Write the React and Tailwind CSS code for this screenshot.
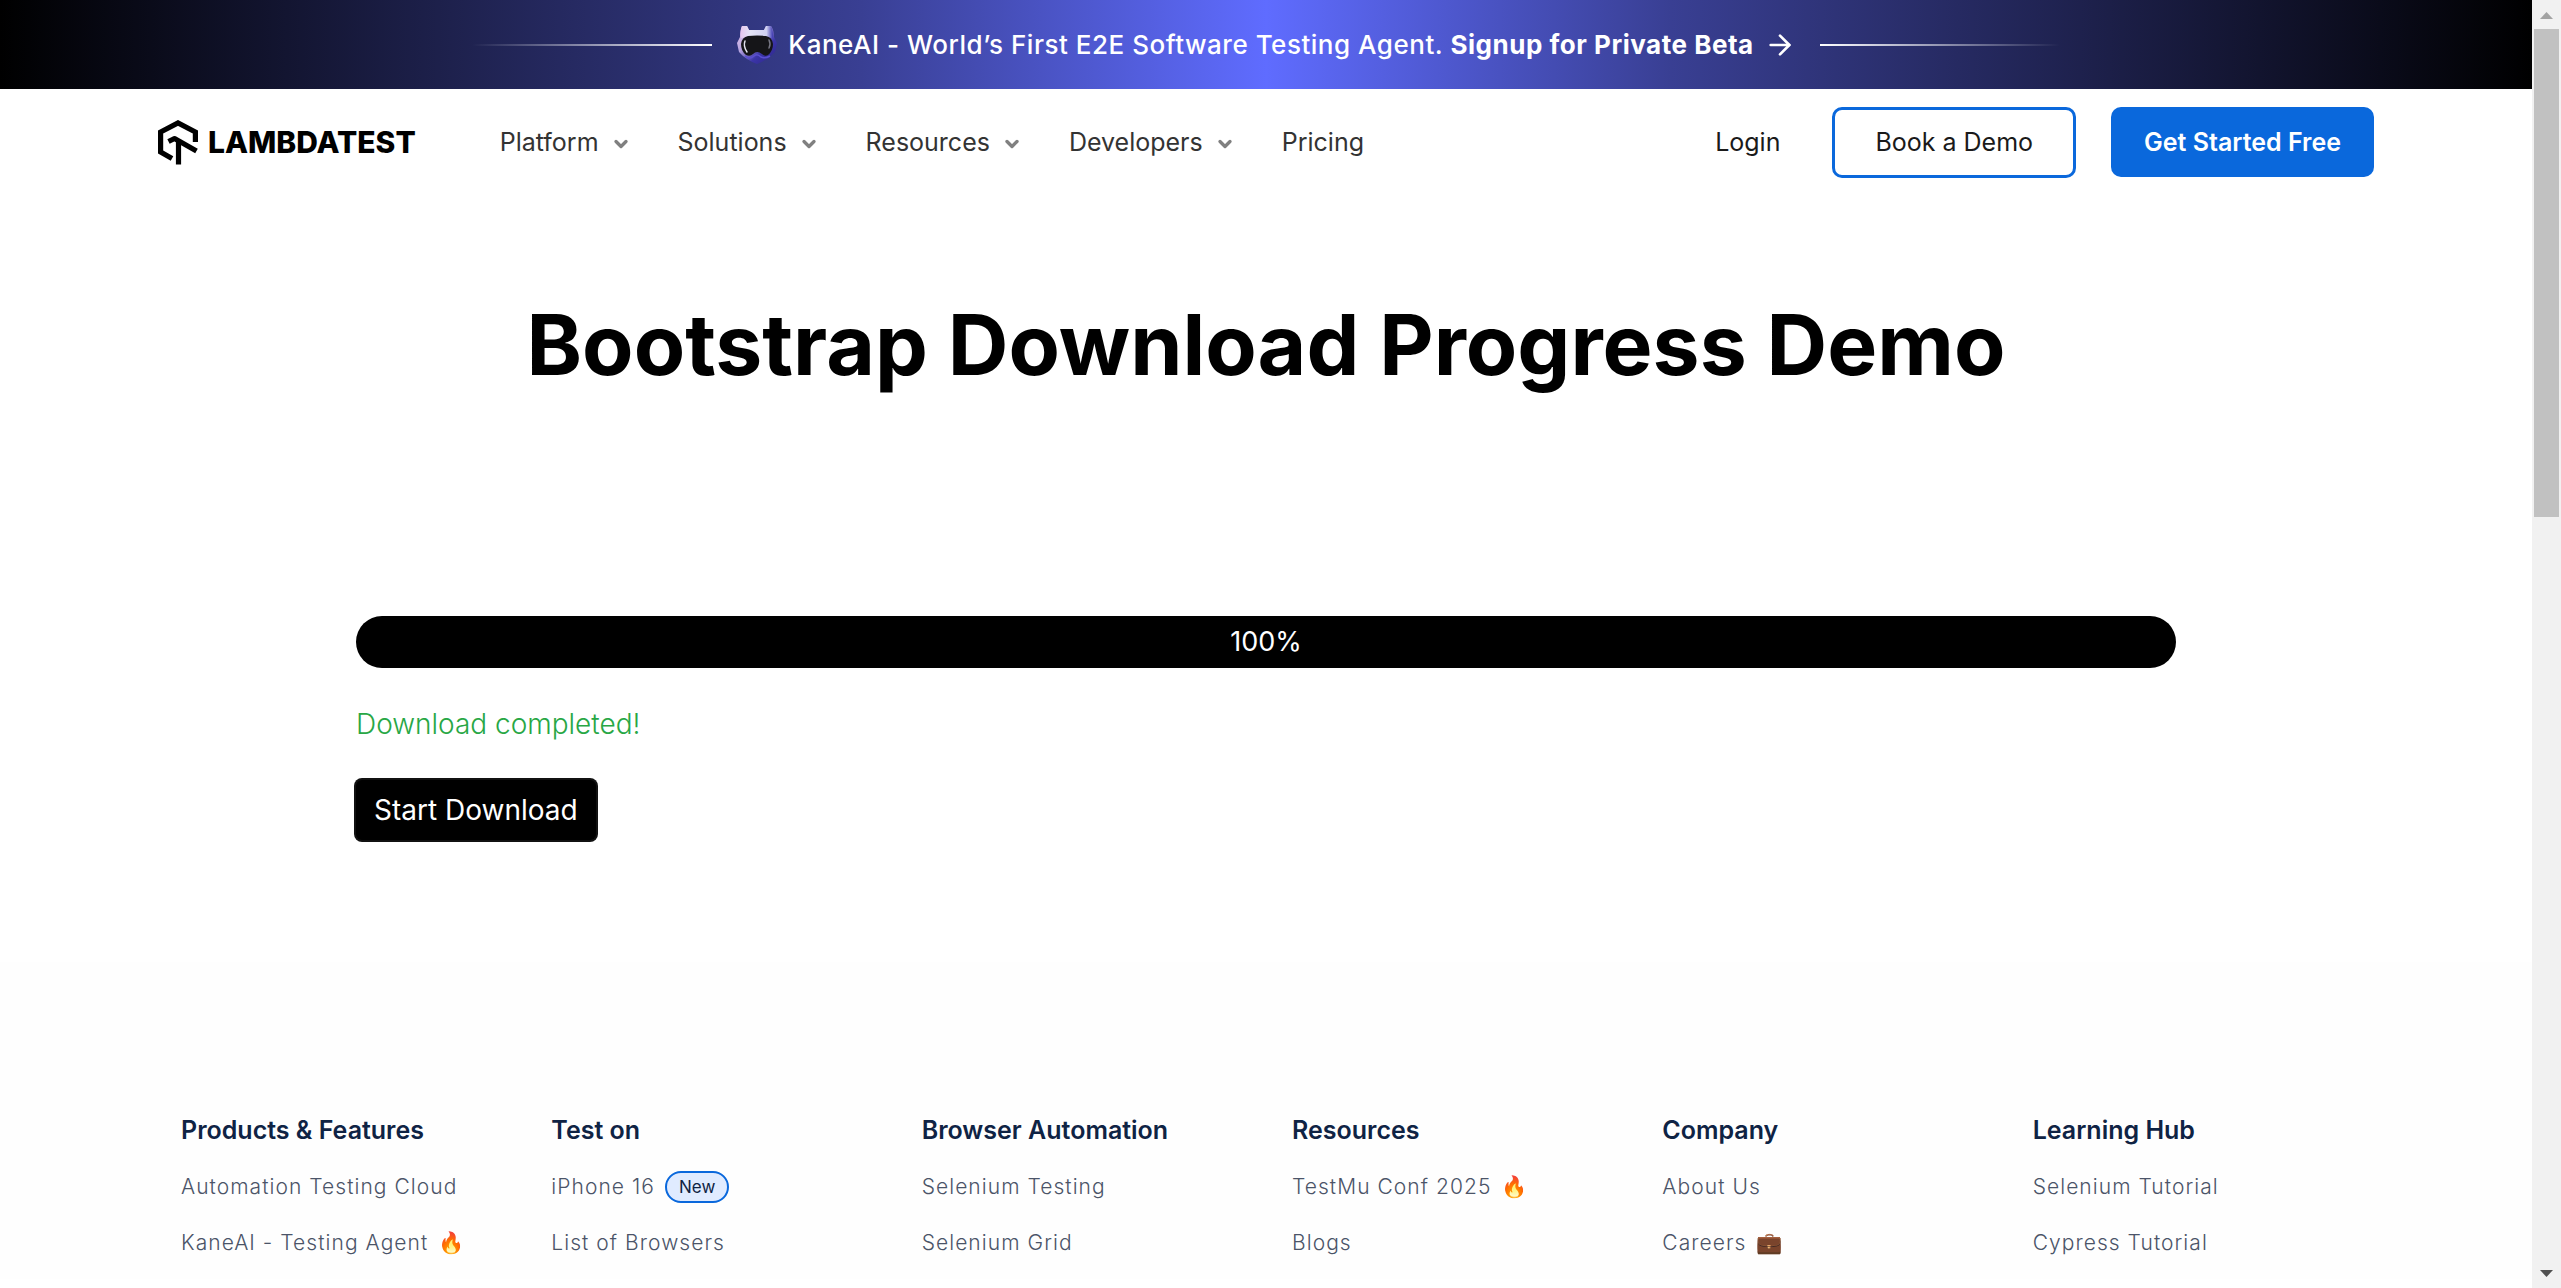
import React from "react";
import { ArrowRight, ChevronDown } from "lucide-react";

const menus = ["Platform", "Solutions", "Resources", "Developers"];

const columns = [
  { title: "Products & Features", links: [["Automation Testing Cloud"], ["KaneAI - Testing Agent", "🔥"]] },
  { title: "Test on", links: [["iPhone 16", null, "New"], ["List of Browsers"]] },
  { title: "Browser Automation", links: [["Selenium Testing"], ["Selenium Grid"]] },
  { title: "Resources", links: [["TestMu Conf 2025", "🔥"], ["Blogs"]] },
  { title: "Company", links: [["About Us"], ["Careers", "💼"]] },
  { title: "Learning Hub", links: [["Selenium Tutorial"], ["Cypress Tutorial"]] },
];

function Robot() {
  return (
    <svg viewBox="0 0 42 40" className="h-10 w-[42px]" aria-hidden="true">
      <defs>
        <linearGradient id="shell" x1="0" y1="0" x2="1" y2="1">
          <stop offset="0" stopColor="#e9c9ee" />
          <stop offset="0.35" stopColor="#b9a6e0" />
          <stop offset="0.65" stopColor="#3b35a8" />
          <stop offset="1" stopColor="#2a2384" />
        </linearGradient>
        <linearGradient id="brow" x1="0" y1="0" x2="1" y2="0">
          <stop offset="0" stopColor="#e6c6ee" />
          <stop offset="0.3" stopColor="#e4e4f6" />
          <stop offset="0.8" stopColor="#cfd0f0" />
          <stop offset="1" stopColor="#3a36b0" />
        </linearGradient>
      </defs>
      <path d="M6 1 H11 L13 5 H28 L30 1 H35 Q38 5 38 12 L41 18 L39 27 Q32 35 21 39 Q10 35 3 27 L1 18 L4 12 Q4 5 6 1Z" fill="url(#shell)" />
      <path d="M6 1 H11 L13 5 H28 L30 1 H35 Q37 5 37 13 Q21 10 5 13 Q4 5 6 1Z" fill="url(#brow)" />
      <path d="M12 11 Q21 10 30 11 Q36 12 37 19 Q37 26 32 30 Q29 32 26 29 Q21 25 17 29 Q14 32 10 30 Q5 26 5 19 Q6 12 12 11Z" fill="#151518" />
      <path d="M9 16 Q7 21 11 27" stroke="#e4e4ee" strokeWidth="1.5" fill="none" strokeLinecap="round" />
      <path d="M33 15 Q35 19 33 23" stroke="#777784" strokeWidth="1.5" fill="none" strokeLinecap="round" />
      <path d="M9 31 Q14 35 18 31 Q21 28 25 32 Q29 34 34 31" stroke="#5a4fd0" strokeWidth="1.5" fill="none" />
    </svg>
  );
}

function Logo() {
  return (
    <a href="#home" aria-label="LambdaTest" className="flex items-center gap-2.5 text-black">
      <svg viewBox="0 0 40 45" className="h-[45px] w-10" fill="none" stroke="currentColor" strokeWidth="5.2" aria-hidden="true">
        <path d="M14 38.5 L2.6 32 V12 L20 2.9 L37.4 12 V22" />
        <path d="M10.5 21.5 L16.5 18.5 L38.5 31" strokeLinejoin="round" />
        <path d="M20.5 21 V44.5" />
      </svg>
      <span className="text-[30px] leading-10 font-extrabold">LAMBDATEST</span>
    </a>
  );
}

function Scrollbar() {
  return (
    <div className="flex w-[29px] shrink-0 flex-col items-center justify-between bg-[#f1f1f1]" aria-hidden="true">
      <div className="flex w-full flex-col items-center">
        <svg viewBox="0 0 29 29" className="size-[29px]"><path d="M8 19 L14.5 12 L21 19Z" fill="#a3a3a3" /></svg>
        <div className="h-[488px] w-[25px] bg-[#c1c1c1]" />
      </div>
      <svg viewBox="0 0 29 29" className="size-[29px]"><path d="M8 11 L14.5 18 L21 11Z" fill="#505050" /></svg>
    </div>
  );
}

export default function App() {
  return (
    <div className="flex h-screen overflow-hidden bg-white font-['Inter',sans-serif]">
      <div className="min-w-0 flex-1 overflow-hidden">
        <div className="flex h-[89px] items-center justify-center gap-6 bg-[linear-gradient(90deg,#000_0%,#393f93_34%,#5f6cff_50%,#393f93_66%,#000_100%)] text-white">
          <div className="h-0.5 w-[240px] bg-linear-to-r from-transparent to-white" />
          <a href="#kaneai" className="flex items-center gap-2.5 text-[26px] leading-10 font-medium tracking-[0.02em] whitespace-nowrap">
            <Robot />
            <span>
              KaneAI - World’s First E2E Software Testing Agent. <b className="font-bold">Signup for Private Beta</b>
            </span>
            <ArrowRight className="size-8" />
          </a>
          <div className="h-0.5 w-[240px] bg-linear-to-l from-transparent to-white" />
        </div>

        <header className="flex h-[106px] items-center justify-between px-[158px]">
          <div className="flex items-center gap-[84px]">
            <Logo />
            <nav className="flex items-center gap-[47px] text-[25px] leading-10 text-[#333]">
              {menus.map((m) => (
                <button key={m} type="button" className="flex items-center gap-3">
                  {m}
                  <ChevronDown className="mt-1 size-5 text-[#808080]" strokeWidth={4} />
                </button>
              ))}
              <a href="#pricing">Pricing</a>
            </nav>
          </div>
          <div className="flex items-center text-[25px] leading-10 text-[#1a1a1a]">
            <a href="#login">Login</a>
            <button type="button" className="ml-[52px] h-[71px] rounded-[10px] border-3 border-[#0a68dc] px-10">Book a Demo</button>
            <button type="button" className="ml-[35px] h-[70px] rounded-[10px] bg-[#0a68dc] px-[33px] font-semibold text-white">Get Started Free</button>
          </div>
        </header>

        <main>
          <h1 className="pt-[95px] text-center text-[84px] leading-[110px] font-bold text-black">Bootstrap Download Progress Demo</h1>
          <section className="mx-auto mt-[216px] w-[1820px] max-w-full">
            <div role="progressbar" aria-valuenow={100} aria-label="Download" className="flex h-[52px] items-center justify-center rounded-full bg-black text-[27px] leading-10 text-white">
              100%
            </div>
            <p className="mt-[34px] text-[28px] leading-[44px] font-light text-[#28a745]">Download completed!</p>
            <button type="button" className="mt-[34px] h-[60px] rounded-md bg-black px-[18px] text-[28px] leading-10 text-white ring-2 ring-[#111]">Start Download</button>
          </section>
        </main>

        <footer className="mt-[122px] bg-[#fefefe] px-[155px] pt-[148px]">
          <div className="grid grid-cols-6">
            {columns.map((c) => (
              <section key={c.title} className="px-[26px]">
                <h2 className="text-[25px] leading-10 font-semibold text-[#0f2344]">{c.title}</h2>
                <ul className="mt-[17px] text-[21px] leading-10 font-light tracking-wider text-[#4b5468]">
                  {c.links.map(([label, emoji, badge]) => (
                    <li key={label} className="mb-4 flex items-center gap-2.5 whitespace-nowrap">
                      <a href="#link">{label}</a>
                      {emoji && <span>{emoji}</span>}
                      {badge && (
                        <span className="rounded-full border-2 border-[#0a68dc] bg-[#e0ebff] px-3 text-[17px] leading-7 font-normal tracking-normal text-[#0f2344]">{badge}</span>
                      )}
                    </li>
                  ))}
                </ul>
              </section>
            ))}
          </div>
        </footer>
      </div>
      <Scrollbar />
    </div>
  );
}
